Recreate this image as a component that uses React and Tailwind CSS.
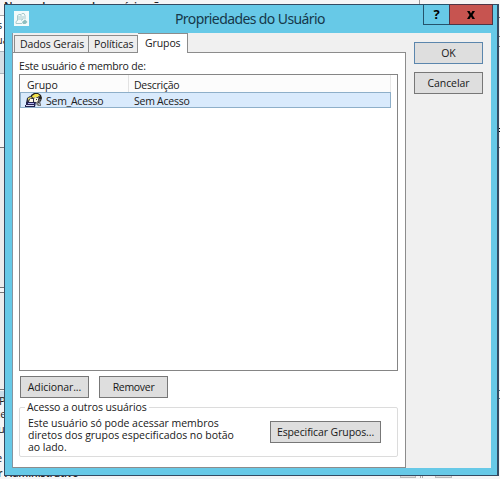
import React from 'react';

function Button({ children, className = '' }) {
  return (
    <button className={`flex h-[22px] items-center justify-center border bg-[#dedede] pb-px text-[10.5px] whitespace-nowrap text-[#181818] ${className}`}>
      {children}
    </button>
  );
}

function AppIcon() {
  return (
    <svg className="block h-[15px] w-[15px]" viewBox="0 0 15 15" fill="none" aria-hidden="true">
      <path d="M0 0h15v15H0z" fill="#f3fbfb" />
      <path d="M3.500 9V4.500L5 3.500h2M7 9V3.500L8 2.500h2l1 2V8M5 5v4M2 12.500v-2L4 9M9 5v3l-2 1.500M2 12.500h6" stroke="#a9cacd" strokeWidth="1" />
      <path d="M8 11l3-2.500L13.500 11l-2 2H9z" fill="#8fbfc0" />
    </svg>
  );
}

function GroupIcon() {
  return (
    <svg className="block h-[15px] w-[17px] shrink-0" viewBox="0 0 17 15" aria-hidden="true">
      <path d="M6 2l3-2h4l3 2 1 3-1 3-2 2H7L5 6z" fill="#26221e" />
      <path d="M7 3l3-2h3l2 2-2 1h-3L8 7z" fill="#f2e34b" />
      <path d="M10 4l3 1v3l-2 2-3-2z" fill="#f5f2df" />
      <path d="M11 6h1v1h-1z" fill="#333" />
      <path d="M2 5l3-2 4 2v5H1z" fill="#303044" />
      <path d="M3 5l3-1 1 1-3 1-1 2z" fill="#eee160" />
      <path d="M5 6h3v3H4z" fill="#fffbe6" />
      <path d="M1 9h10l-1 5H0v-2h1z" fill="#232452" />
      <path d="M3 10h6v1H3z" fill="#b1b0f0" />
      <path d="M1 12h8v1H1z" fill="#d9d9f4" />
      <path d="M12 9h1l1 3h2v1h-3l-2-2z" fill="#777" />
      <path d="M13 3h1v3h-1zM14 6h2l-1 2 1 4h-1l-2-4z" fill="#66666c" />
    </svg>
  );
}

function Backdrop() {
  return (
    <div className="absolute inset-0 overflow-hidden bg-[#f5f5f6] text-[11px] leading-[14px] text-[#222]" aria-hidden="true">
      <div className="absolute top-[-1px] left-[4px] w-[160px] overflow-hidden font-semibold whitespace-nowrap">Nome do grupo de usuário não</div>
      <div className="absolute top-[15px] left-0 h-[36px] w-[5px] border-t border-[#aaa] bg-white" />
      <div className="absolute top-[18px] left-[-3px]">s</div>
      <div className="absolute top-[33px] left-[-4px]">ua</div>
      <div className="absolute top-[51px] left-0 h-[23px] w-[4px] border-y border-[#aab5bd] bg-[#d5dfe5]" />
      <div className="absolute top-[147px] left-0 h-[141px] w-[4px] border-y border-[#777] bg-[#ececec]" />
      <div className="absolute top-[292px] left-0 h-[98px] w-[4px] border-y border-[#777] bg-[#ededed]" />
      <div className="absolute top-[391px] left-0 h-[9px] w-[4px] bg-[#ccdce8]" />
      <div className="absolute top-[394px] left-[-1px]">P</div>
      <div className="absolute top-[407px] left-[-5px]">ce</div>
      <div className="absolute top-[422px] left-[-2px]">u</div>
      <div className="absolute top-[451px] left-[-4px]">e</div>
      <div className="absolute top-[466px] left-[-2px] text-[10.5px] font-semibold whitespace-nowrap">r Administrativo</div>
      <div className="absolute top-0 left-[419px] h-[4px] w-px bg-[#999]" />
      <div className="absolute top-[475px] left-[400px] flex gap-1">
        <div className="h-[3px] w-[16px] border border-[#bbb] bg-[#ddd]" />
        <div className="h-[3px] w-[3px] border-x border-[#aaa]" />
        <div className="ml-2 h-[3px] w-[17px] border border-[#bbb] bg-[#ddd]" />
      </div>
      <div className="absolute top-[17px] left-[498px] h-px w-[2px] bg-[#777]" />
      <div className="absolute top-[36px] left-[498px] h-px w-[2px] bg-[#777]" />
      <div className="absolute top-[46px] left-[498px] h-px w-[2px] bg-[#777]" />
      <div className="absolute top-[128px] left-[498px] h-[4px] w-[2px] border-y border-black" />
      <div className="absolute top-[147px] left-[498px] h-px w-[2px] bg-[#777]" />
      <div className="absolute top-[390px] left-[498px] h-[9px] w-[2px] border-y border-[#4d7c91]" />
    </div>
  );
}

export default function App() {
  return (
    <main className="relative h-[479px] w-[500px] overflow-hidden font-['Open_Sans',sans-serif] text-[10.5px] font-medium leading-[14px] tracking-[-0.1px] text-[#202020]">
      <Backdrop />
      <section className="absolute top-[4px] left-[4px] flex h-[472px] w-[495px] flex-col border border-r-2 border-[#344b63] bg-[#67c9e7] pr-[6px] pb-[7px] pl-[7px]">
        <header className="flex h-[28px] shrink-0 items-start">
          <div className="mt-[6px] ml-[2px] w-[15px]"><AppIcon /></div>
          <h1 className="mt-[3px] flex-1 pl-[146px] font-['Noto_Sans',sans-serif] text-[14px] font-normal leading-[22px] tracking-[-0.6px] whitespace-nowrap text-[#16384a]">Propriedades do Usuário</h1>
          <div className="-mt-px mr-[-2px] flex">
            <button className="flex h-[21px] w-[27px] items-center justify-center border border-[#24536c] pb-px text-[13px] font-bold text-black">?</button>
            <button className="-ml-px flex h-[21px] w-[44px] items-center justify-center border border-[#503545] bg-[#c75450] text-black" aria-label="Fechar">
              <svg className="h-[8px] w-[8px]" viewBox="0 0 8 8"><path d="M0 0h2.600l1.400 2.400L5.400 0H8L5.500 4 8 8H5.400L4 5.600 2.600 8H0l2.500-4z" fill="currentColor" /></svg>
            </button>
          </div>
        </header>
        <div className="flex min-h-0 flex-1 bg-[#f0f0f0]">
          <div className="flex w-[394px] flex-col border-l border-[#8595a1]">
            <nav className="flex h-[19px] shrink-0 items-end pl-px">
              <div className="h-[17px] w-[75px] border border-b-0 border-[#8c8c8c] bg-[#eee] pt-px pl-[5px] whitespace-nowrap">Dados Gerais</div>
              <div className="h-[17px] w-[49px] border border-b-0 border-l-0 border-[#8c8c8c] bg-[#eee] pt-px pl-[5px]">Políticas</div>
              <div className="relative z-10 -mb-px h-[20px] w-[50px] border-t border-r border-[#8c8c8c] bg-white pt-[2px] pl-[7px]">Grupos</div>
            </nav>
            <div className="flex flex-1 flex-col border border-l-0 border-[#8c8c8c] bg-white pr-[7px] pl-[6px]">
              <p className="mt-[6px] h-[15px] tracking-[-0.2px]">Este usuário é membro de:</p>
              <div className="h-[297px] border border-[#858585] bg-white pr-[6px]">
                <div className="flex h-[17px] items-center bg-[#fcfcfc]">
                  <div className="h-full w-[109px] border-r border-[#e2e2e2] pt-[3px] pl-[7px]">Grupo</div>
                  <div className="h-full flex-1 border-r border-[#e8e8e8] pt-[3px] pl-[5px] tracking-[-0.25px]">Descrição</div>
                </div>
                <div className="flex h-[16px] items-center border border-[#8eafc9] bg-[#d9eafc] tracking-[-0.25px]">
                  <div className="flex w-[108px] items-center pl-[4px]"><GroupIcon /><span className="pt-px pl-[4px]">Sem_Acesso</span></div>
                  <span className="pt-px pl-[5px]">Sem Acesso</span>
                </div>
              </div>
              <div className="mt-[5px] flex gap-[10px] pl-px">
                <Button className="w-[69px] border-[#777]">Adicionar...</Button>
                <Button className="w-[69px] border-[#777] tracking-[-0.3px]">Remover</Button>
              </div>
              <fieldset className="mt-[2px] h-[57px] rounded-[2px] border border-[#dcdcdc] px-[8px]">
                <legend className="-ml-[3px] bg-white px-[2px] leading-[14px]">Acesso a outros usuários</legend>
                <div className="flex items-start justify-between">
                  <p className="mt-[3px] leading-[12px] tracking-[-0.03px] whitespace-nowrap">Este usuário só pode acessar membros<br />diretos dos grupos especificados no botão<br />ao lado.</p>
                  <Button className="mt-[7px] mr-[8px] w-[111px] border-[#777]">Especificar Grupos...</Button>
                </div>
              </fieldset>
            </div>
          </div>
          <aside className="flex flex-1 flex-col gap-[8px] pt-[9px] pl-[8px]">
            <Button className="w-[69px] border-[#5b86ad]">OK</Button>
            <Button className="w-[69px] border-[#777]">Cancelar</Button>
          </aside>
        </div>
      </section>
    </main>
  );
}
